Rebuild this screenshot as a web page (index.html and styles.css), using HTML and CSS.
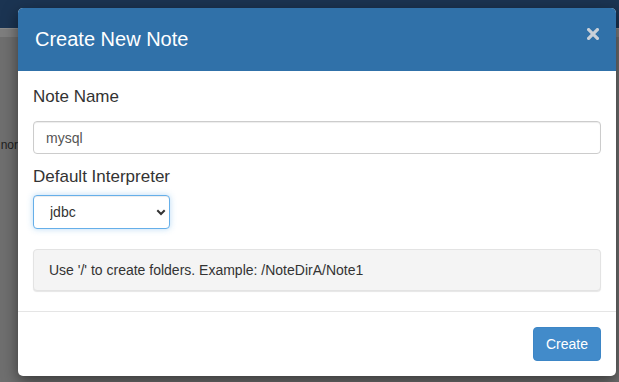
FILE: index.html
```html
<!DOCTYPE html>
<html lang="en">
<head>
<meta charset="utf-8">
<title>Create New Note</title>
<link rel="stylesheet" href="styles.css">
</head>
<body>
<div class="page">
  <div class="navbar"></div>
  <div class="strip"></div>
  <div class="content">
    <div class="side"><span>nor</span></div>
  </div>
</div>

<div class="modal">
  <div class="modal-header">
    <h4 class="modal-title">Create New Note</h4>
    <button class="close" type="button" aria-label="Close">
      <svg width="12" height="12" viewBox="0 0 12 12"><path d="M1.6 1.6 L10.4 10.4 M10.4 1.6 L1.6 10.4" stroke="currentColor" stroke-width="3.2" stroke-linecap="square" fill="none"/></svg>
    </button>
  </div>
  <div class="modal-body">
    <label class="lbl lbl-name">Note Name</label>
    <input class="form-control" type="text" value="mysql">
    <label class="lbl lbl-interp">Default Interpreter</label>
    <div class="select-wrap">
      <select class="form-select"><option>jdbc</option></select>
      <svg class="chev" width="10" height="7" viewBox="0 0 10 7"><path d="M1.3 1.3 L5 5 L8.7 1.3" stroke="#333" stroke-width="2" fill="none"/></svg>
    </div>
    <div class="well">Use '/' to create folders. Example: /NoteDirA/Note1</div>
  </div>
  <div class="modal-footer">
    <button class="btn" type="button">Create</button>
  </div>
</div>
</body>
</html>
```
FILE: styles.css
```css
html, body {
  margin: 0;
  padding: 0;
}
body {
  width: 619px;
  height: 382px;
  overflow: hidden;
  background: #6f6f6f;
  font-family: "Liberation Sans", Arial, sans-serif;
  position: relative;
}
.navbar {
  height: 28px;
  background: #1b3452;
}
.strip {
  height: 9px;
  background: #7e7e7e;
  border-top: 1px solid #8c8c8c;
  box-sizing: border-box;
}
.content {
  display: flex;
  padding-top: 100px;
}
.side {
  width: 18px;
  display: flex;
  justify-content: flex-end;
  white-space: nowrap;
  font-size: 12px;
  line-height: 16px;
  color: #1e1e1e;
}

.modal {
  position: absolute;
  left: 18px;
  top: 8px;
  width: 598px;
  background: #fff;
  border-radius: 5px;
  overflow: hidden;
  box-shadow: 0 5px 15px rgba(0, 0, 0, 0.5);
}
.modal-header {
  height: 63px;
  box-sizing: border-box;
  background: #3071a9;
  padding: 0 17px;
  display: flex;
  align-items: center;
  justify-content: space-between;
}
.modal-title {
  margin: 0;
  font-size: 20px;
  font-weight: normal;
  color: #fff;
  line-height: normal;
}
.close {
  align-self: flex-start;
  margin-top: 20px;
  padding: 0;
  border: 0;
  background: none;
  color: #c9d0d8;
  width: 12px;
  height: 12px;
  display: block;
}
.close svg {
  display: block;
}

.modal-body {
  display: flex;
  flex-direction: column;
  align-items: flex-start;
  padding: 14px 15px 20px;
}
.lbl {
  display: block;
  font-size: 17px;
  line-height: 24px;
  color: #333;
}
.lbl-name {
  margin-bottom: 12px;
}
.lbl-interp {
  margin-bottom: 6px;
}
.form-control {
  width: 100%;
  height: 33px;
  box-sizing: border-box;
  margin: 0 0 11px;
  padding: 0 12px;
  font-family: inherit;
  font-size: 14px;
  color: #555;
  border: 1px solid #ccc;
  border-radius: 4px;
  box-shadow: inset 0 1px 1px rgba(0, 0, 0, 0.075);
  outline: none;
}
.select-wrap {
  position: relative;
  width: 137px;
}
.form-select {
  display: block;
  width: 100%;
  height: 34px;
  box-sizing: border-box;
  margin: 0;
  padding: 0 24px 0 16px;
  -webkit-appearance: none;
  appearance: none;
  background: #fff;
  font-family: inherit;
  font-size: 14px;
  color: #333;
  border: 1px solid #66afe9;
  border-radius: 4px;
  box-shadow: inset 0 1px 1px rgba(0, 0, 0, 0.075), 0 0 6px rgba(102, 175, 233, 0.45);
  outline: none;
}
.chev {
  position: absolute;
  left: 123px;
  top: 14px;
  pointer-events: none;
}
.well {
  align-self: stretch;
  margin-top: 20px;
  height: 42px;
  box-sizing: border-box;
  padding: 0 15px;
  display: flex;
  align-items: center;
  background: #f4f4f4;
  border: 1px solid #e3e3e3;
  border-radius: 4px;
  box-shadow: 0 1px 1px rgba(0, 0, 0, 0.1);
  font-size: 14px;
  color: #333;
}

.modal-footer {
  border-top: 1px solid #e5e5e5;
  padding: 15px;
  display: flex;
  justify-content: flex-end;
}
.btn {
  height: 34px;
  box-sizing: border-box;
  padding: 0 12px;
  background: #428bca;
  border: 1px solid #3d86c6;
  border-radius: 4px;
  color: #fff;
  font-family: inherit;
  font-size: 14px;
}
```
